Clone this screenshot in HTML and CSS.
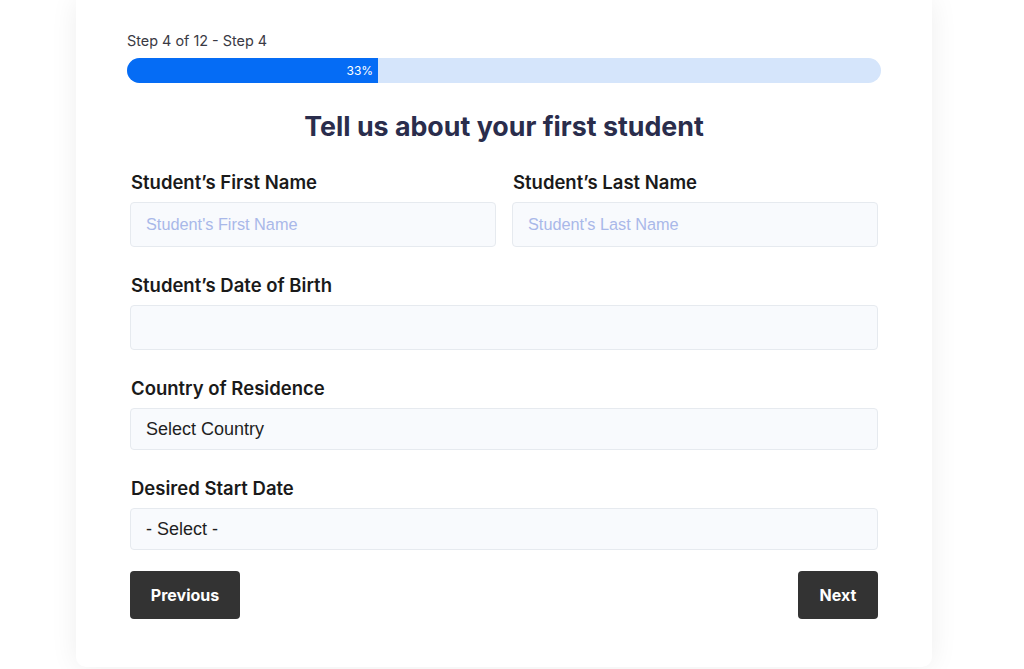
FILE: index.html
```html
<!DOCTYPE html>
<html lang="en">
<head>
<meta charset="utf-8">
<title>Tell us about your first student</title>
<link rel="stylesheet" href="styles.css">
</head>
<body>
<div class="page">
  <div class="card">
    <div class="step">Step 4 of 12 - Step 4</div>
    <div class="progress">
      <div class="progress-fill" style="width:33.3%"><span>33%</span></div>
    </div>
    <h1 class="title">Tell us about your first student</h1>
    <form class="form">
      <div class="row two">
        <div class="field">
          <label class="label">Student’s First Name</label>
          <input class="input" type="text" placeholder="Student's First Name">
        </div>
        <div class="field">
          <label class="label">Student’s Last Name</label>
          <input class="input" type="text" placeholder="Student's Last Name">
        </div>
      </div>
      <div class="row">
        <div class="field">
          <label class="label">Student’s Date of Birth</label>
          <input class="input" type="text">
        </div>
      </div>
      <div class="row">
        <div class="field">
          <label class="label">Country of Residence</label>
          <select class="select"><option>Select Country</option></select>
        </div>
      </div>
      <div class="row">
        <div class="field">
          <label class="label">Desired Start Date</label>
          <select class="select"><option>- Select -</option></select>
        </div>
      </div>
      <div class="actions">
        <button type="button" class="btn">Previous</button>
        <button type="button" class="btn">Next</button>
      </div>
    </form>
  </div>
</div>
</body>
</html>
```

FILE: styles.css
```css
* { box-sizing: border-box; }
html, body { margin: 0; padding: 0; background: #ffffff; }
body { font-family: "Inter", "Open Sans", sans-serif; color: #1d1d1f; overflow: hidden; }

.page { padding-left: 76px; height: 669px; }

.card {
  width: 856px;
  background: #ffffff;
  border-radius: 0 0 10px 10px;
  box-shadow: 0 0 28px rgba(0, 0, 0, 0.07);
  padding: 31px 51px 48px;
}

.step {
  font-size: 14.4px;
  line-height: 20px;
  color: #3a3a44;
}

.progress {
  margin-top: 7px;
  height: 25px;
  border-radius: 13px;
  background: #d5e5fb;
  overflow: hidden;
}
.progress-fill {
  height: 100%;
  background: #056cf5;
  display: flex;
  align-items: center;
  justify-content: flex-end;
  padding-right: 5px;
  color: #ffffff;
  font-size: 12px;
}

.title {
  margin: 26px 0 0;
  text-align: center;
  font-size: 26.8px;
  line-height: 34px;
  font-weight: 700;
  color: #2a2d4c;
}

.form { padding: 0 3px; margin-top: 27px; }

.row { margin-bottom: 26px; }
.row.two { display: flex; gap: 16px; }
.row.two .field { flex: 1; }

.field { display: flex; flex-direction: column; }

.label {
  font-size: 18.5px;
  line-height: 25px;
  font-weight: 600;
  color: #1a1a1a;
  padding-left: 1px;
  margin-bottom: 7px;
}

.input, .select {
  width: 100%;
  height: 45px;
  border: 1px solid #e6eaef;
  border-radius: 4px;
  background: #f8fafd;
  padding: 0 15px;
  font-family: "Liberation Sans", Arial, sans-serif;
  font-size: 16.3px;
  color: #222;
  outline: none;
}
.input::placeholder { color: #a9b8e9; }

.select {
  height: 42px;
  font-size: 18px;
  color: #1f1f1f;
  -webkit-appearance: none;
  appearance: none;
}

.actions {
  display: flex;
  justify-content: space-between;
  margin-top: -5px;
}
.btn {
  height: 48px;
  padding: 0;
  border: none;
  border-radius: 4px;
  background: #333333;
  color: #ffffff;
  font-family: "Inter", "Open Sans", sans-serif;
  font-size: 16px;
  font-weight: 700;
}
.btn:first-child { width: 110px; }
.btn:last-child { width: 80px; }
```
